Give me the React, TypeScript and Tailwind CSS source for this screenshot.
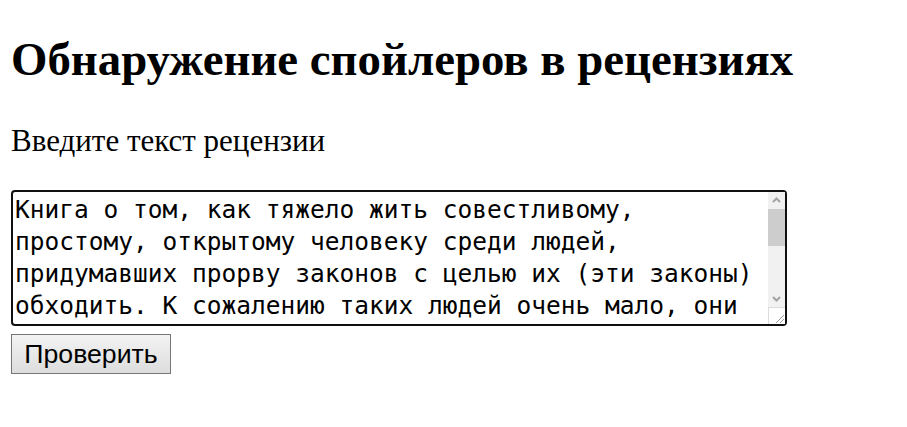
const review =
  'Книга о том, как тяжело жить совестливому, простому, открытому человеку среди людей, придумавших прорву законов с целью их (эти законы) обходить. К сожалению таких людей очень мало, они всегда страдают, но остаются верны себе до самого конца. Читается легко, хотя местами очень грустно. Главный герой не меняется на протяжении всей книги, и в этом его сила. Финал открытый, и каждый читатель сам решит, чем всё закончилось для него и для всех остальных.';

function Chevron({ up }: { up?: boolean }) {
  return (
    <svg width="17" height="17" viewBox="0 0 17 17" className="block">
      <polyline
        points={up ? '5,10 8.5,6.5 12,10' : '5,7 8.5,10.5 12,7'}
        fill="none"
        stroke="#a3a3a3"
        strokeWidth="2"
      />
    </svg>
  );
}

function FakeScrollbar() {
  return (
    <div className="absolute bottom-[2px] right-[2px] top-[2px] flex w-[17px] flex-col bg-[#f1f1f1]">
      <Chevron up />
      <div className="h-[37px] w-full bg-[#cdcdcd]" />
      <div className="flex-1" />
      <Chevron />
      <div className="h-[17px] w-full border-l border-t border-[#dcdcdc] bg-white">
        <svg width="16" height="16" viewBox="0 0 16 16" className="block">
          <line x1="15" y1="7" x2="7" y2="15" stroke="#9a9a9a" strokeWidth="1" />
          <line x1="15" y1="11" x2="11" y2="15" stroke="#9a9a9a" strokeWidth="1" />
        </svg>
      </div>
    </div>
  );
}

export default function App() {
  return (
    <div className="min-h-[427px] bg-white px-[11px] pt-[31px] text-black">
      <h1 className="font-['Liberation_Serif',serif] text-[46.8px] font-bold leading-[56px]">
        Обнаружение спойлеров в рецензиях
      </h1>

      <p className="mt-[36px] font-['Liberation_Serif',serif] text-[31px] leading-[36px]">
        Введите текст рецензии
      </p>

      <form className="mt-[31px] flex flex-col items-start gap-[8px]">
        <div className="relative h-[136px] w-[776px]">
          <textarea
            rows={4}
            defaultValue={review}
            className="block h-full w-full resize-none overflow-hidden rounded-[4px] border-2 border-[#101010] bg-white py-[2px] pl-[2px] pr-[19px] font-['DejaVu_Sans_Mono',monospace] text-[24.5px] leading-[32px] text-black outline-none"
          />
          <FakeScrollbar />
        </div>
        <button
          type="button"
          className="h-[40px] w-[160px] border border-[#767676] bg-gradient-to-b from-[#f3f3f3] to-[#dddddd] font-['Liberation_Sans',Arial,sans-serif] text-[26.67px] leading-none text-black"
        >
          Проверить
        </button>
      </form>
    </div>
  );
}
